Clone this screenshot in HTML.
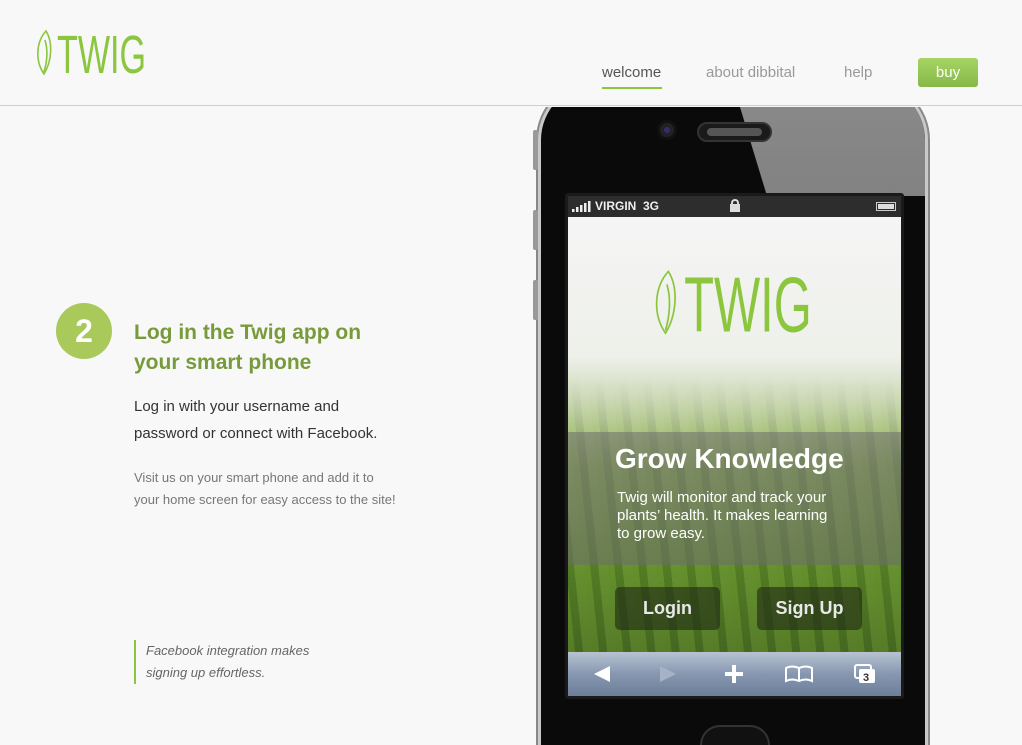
<!DOCTYPE html>
<html style="width:1022px;height:745px;overflow:hidden"><head><meta charset="utf-8"><style>
*{margin:0;padding:0;box-sizing:border-box}
body{width:1022px;height:745px;overflow:hidden;background:#f8f8f8;font-family:"Liberation Sans",sans-serif;position:relative}
#w{position:absolute;left:0;top:0;width:1022px;height:745px;overflow:hidden}
.hdr{position:absolute;left:0;top:0;width:1022px;height:106px;border-bottom:1px solid #cfcfcf;background:#f8f8f8;z-index:3}
.nav a{position:absolute;top:64px;font-size:15px;color:#999;text-decoration:none}
.abs{position:absolute}
</style></head><body><div id="w">
<div class="hdr">
  <svg class="abs" style="left:36px;top:28px" width="115" height="50" viewBox="0 0 115 50">
    <path d="M10 3 C0 14 -1 33 8 46 C16 33 17 14 10 3 Z M9 12 C12 22 11 34 8 44" fill="none" stroke="#8cc63f" stroke-width="1.6"/>
    <text x="21" y="45" font-family="Liberation Sans" font-size="54" fill="#8cc63f" textLength="89" lengthAdjust="spacingAndGlyphs">TWIG</text>
  </svg>
  <div class="nav">
    <a style="left:602px;color:#555">welcome</a>
    <div class="abs" style="left:602px;top:87px;width:60px;height:2px;background:#8cc63f"></div>
    <a style="left:706px">about dibbital</a>
    <a style="left:844px">help</a>
  </div>
  <div class="abs" style="left:918px;top:58px;width:60px;height:29px;border-radius:3px;background:linear-gradient(#a6d465,#86b848);color:#fff;font-size:15px;text-align:center;line-height:29px">buy</div>
</div>

<div class="abs" style="left:56px;top:303px;width:56px;height:56px;border-radius:50%;background:#a9c95a;color:#fff;font-size:32px;font-weight:bold;text-align:center;line-height:56px">2</div>
<div class="abs" style="left:134px;top:318px;font-size:21px;font-weight:bold;color:#779a3a;line-height:30px">Log in the Twig app on<br>your smart phone</div>
<div class="abs" style="left:134px;top:393px;font-size:15px;color:#333;line-height:27px">Log in with your username and<br>password or connect with Facebook.</div>
<div class="abs" style="left:134px;top:467px;font-size:13px;color:#777;line-height:22px">Visit us on your smart phone and add it to<br>your home screen for easy access to the site!</div>
<div class="abs" style="left:134px;top:640px;border-left:2px solid #8cc63f;padding-left:10px;font-size:13px;font-style:italic;color:#666;line-height:22px;height:44px">Facebook integration makes<br>signing up effortless.</div>

<!-- phone -->
<div class="abs" style="left:536px;top:80px;width:394px;height:665px;border-radius:60px 60px 0 0;background:#c9c9c9;border:2px solid #888;border-bottom:none"></div>
<div class="abs" style="left:541px;top:84px;width:384px;height:661px;border-radius:56px 56px 0 0;background:#0a0a0a;overflow:hidden">
  <div class="abs" style="left:0;top:0;width:384px;height:661px;clip-path:polygon(192px 0,384px 0,384px 112px,226px 112px);background:linear-gradient(#8a8a8a,#5a5a5a)"></div>
</div>
<div class="abs" style="left:0;top:0;width:1022px;height:107px;background:#f8f8f8;z-index:2"></div>
<div class="abs" style="left:533px;top:130px;width:5px;height:40px;background:#999;border-radius:2px"></div>
<div class="abs" style="left:533px;top:210px;width:5px;height:40px;background:#999;border-radius:2px"></div>
<div class="abs" style="left:533px;top:280px;width:5px;height:40px;background:#999;border-radius:2px"></div>
<div class="abs" style="left:657px;top:120px;width:20px;height:20px;border-radius:50%;background:#222;border:3px solid #111"><div style="width:6px;height:6px;margin:4px;border-radius:50%;background:#3a2a6a"></div></div>
<div class="abs" style="left:697px;top:122px;width:75px;height:20px;border-radius:10px;background:#1a1a1a;border:2px solid #333"><div style="margin:4px 8px;height:8px;border-radius:4px;background:#555"></div></div>

<div class="abs" style="left:565px;top:193px;width:339px;height:506px;background:#1a1a1a;border-radius:3px"></div>
<div class="abs" style="left:568px;top:196px;width:333px;height:21px;background:#2d2d2d;color:#eee;font-size:12px;font-weight:bold;line-height:21px;padding-left:27px">VIRGIN &nbsp;3G
  <svg class="abs" style="left:4px;top:5px" width="20" height="11"><rect x="0" y="8" width="2.5" height="3" fill="#eee"/><rect x="4" y="6" width="2.5" height="5" fill="#eee"/><rect x="8" y="4" width="2.5" height="7" fill="#eee"/><rect x="12" y="2" width="2.5" height="9" fill="#eee"/><rect x="16" y="0" width="2.5" height="11" fill="#eee"/></svg>
  <div class="abs" style="left:162px;top:8px;width:10px;height:8px;background:#ddd"></div>
  <div class="abs" style="left:163px;top:3px;width:8px;height:7px;border:2px solid #ddd;border-bottom:none;border-radius:4px 4px 0 0"></div>
  <div class="abs" style="left:308px;top:6px;width:20px;height:9px;border:1px solid #ccc;background:#ddd;box-shadow:inset 0 0 0 1px #2d2d2d"></div>
</div>
<div class="abs" style="left:568px;top:217px;width:333px;height:435px;overflow:hidden;background:linear-gradient(#f5f5f5 0,#eef0ea 140px,#c8d6b0 190px,#8aaa55 250px,#5e8a2a 340px,#4a6e22 435px)">
  <div class="abs" style="left:0;top:160px;width:333px;height:275px;background:repeating-linear-gradient(84deg,rgba(140,190,60,.18) 0 7px,rgba(40,70,20,.16) 7px 15px,rgba(170,210,90,.14) 15px 24px);-webkit-mask-image:linear-gradient(transparent,#000 80px);mask-image:linear-gradient(transparent,#000 80px)"></div>
  <svg class="abs" style="left:86px;top:50px" width="165" height="72" viewBox="0 0 115 50">
    <path d="M10 3 C0 14 -1 33 8 46 C16 33 17 14 10 3 Z M9 12 C12 22 11 34 8 44" fill="none" stroke="#8cc63f" stroke-width="1.2"/>
    <text x="21" y="45" font-family="Liberation Sans" font-size="54" fill="#8cc63f" textLength="89" lengthAdjust="spacingAndGlyphs">TWIG</text>
  </svg>
  <div class="abs" style="left:0;top:215px;width:333px;height:133px;background:rgba(110,110,110,.55)"></div>
  <div class="abs" style="left:47px;top:226px;color:#fff;font-size:28px;font-weight:bold">Grow Knowledge</div>
  <div class="abs" style="left:49px;top:272px;color:#fff;font-size:15px;line-height:18px">Twig will monitor and track your<br>plants’ health. It makes learning<br>to grow easy.</div>
  <div class="abs" style="left:47px;top:370px;width:105px;height:43px;border-radius:5px;background:rgba(30,40,20,.6);color:#e8e8e8;font-size:18px;font-weight:bold;text-align:center;line-height:43px">Login</div>
  <div class="abs" style="left:189px;top:370px;width:105px;height:43px;border-radius:5px;background:rgba(30,40,20,.6);color:#e8e8e8;font-size:18px;font-weight:bold;text-align:center;line-height:43px">Sign Up</div>
</div>
<div class="abs" style="left:568px;top:652px;width:333px;height:44px;background:linear-gradient(#b7c3d3,#8797b0 50%,#6d7e9a);color:#fff">
  <svg width="333" height="44">
    <path d="M26 22 L42 14 L42 30 Z" fill="#fff"/>
    <path d="M92 14 L108 22 L92 30 Z" fill="#a6b3c6"/>
    <path d="M166 13 V31 M157 22 H175" stroke="#fff" stroke-width="4"/>
    <path d="M218 16 Q224 13 231 16 Q238 13 244 16 V29 Q238 26 231 29 Q224 26 218 29 Z M231 16 V29" fill="none" stroke="#fff" stroke-width="2"/>
    <rect x="287" y="13" width="16" height="13" rx="2" fill="none" stroke="#fff" stroke-width="2"/>
    <rect x="291" y="17" width="16" height="14" rx="2" fill="#fff"/>
    <text x="295" y="29" font-size="11" font-weight="bold" fill="#333">3</text>
  </svg>
</div>
<div class="abs" style="left:700px;top:725px;width:70px;height:20px;border-radius:35px 35px 0 0;background:#111;border:2px solid #333;border-bottom:none"></div>
</div></body></html>
